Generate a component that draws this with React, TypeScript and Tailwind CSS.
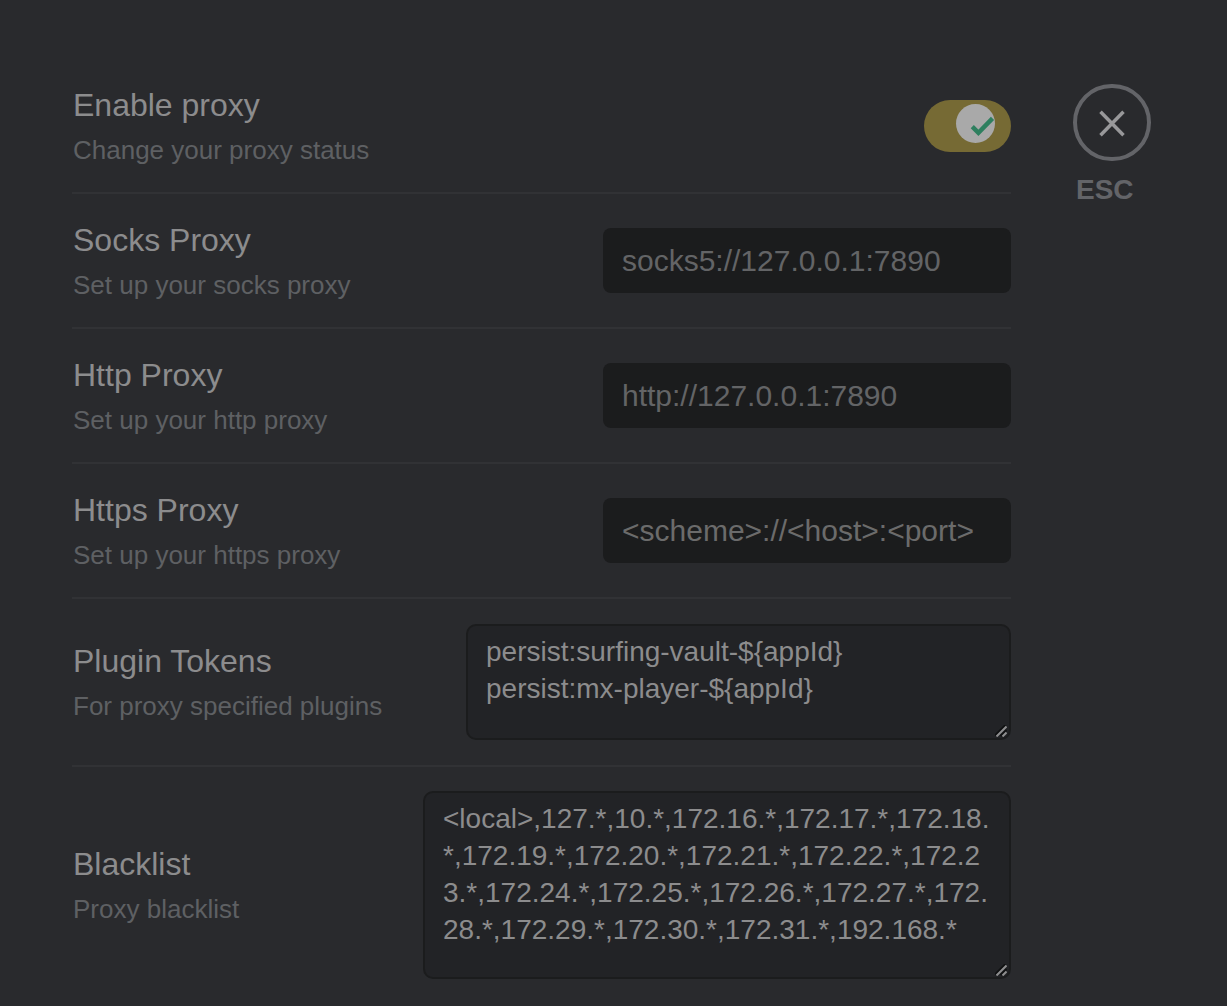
import { ReactNode } from "react";

type RowProps = {
  id: string;
  title: string;
  hint: string;
  last?: boolean;
  children: ReactNode;
};

function Row({ id, title, hint, last = false, children }: RowProps) {
  return (
    <div
      className={
        last
          ? "flex min-h-[135px] items-center justify-between gap-6 py-6"
          : "flex min-h-[135px] items-center justify-between gap-6 border-b-2 border-[#313235] py-[25px]"
      }
    >
      <div className="-my-2 min-w-0 pl-px">
        <label htmlFor={id} className="block text-[32px] leading-[48px] text-[#8c8c8d]">
          {title}
        </label>
        <p id={`${id}-hint`} className="text-[26px] leading-[42px] text-[#5e6063]">
          {hint}
        </p>
      </div>
      {children}
    </div>
  );
}

type FieldProps = { id: string; title: string; hint: string; value?: string; placeholder?: string };

function ProxyField({ id, title, hint, value, placeholder }: FieldProps) {
  return (
    <Row id={id} title={title} hint={hint}>
      <input
        id={id}
        type="text"
        aria-describedby={`${id}-hint`}
        defaultValue={value}
        placeholder={placeholder}
        className="h-[65px] w-[408px] min-w-0 rounded-lg bg-[#1b1c1d] px-[19px] text-[30px] text-[#636466] outline-none placeholder:text-[#6b6b6b] placeholder:opacity-100"
      />
    </Row>
  );
}

type AreaProps = {
  id: string;
  title: string;
  hint: string;
  value: string;
  size: string;
  last?: boolean;
};

function AreaField({ id, title, hint, value, size, last }: AreaProps) {
  return (
    <Row id={id} title={title} hint={hint} last={last}>
      <div className="relative flex">
        <textarea
          id={id}
          aria-describedby={`${id}-hint`}
          defaultValue={value}
          spellCheck={false}
          className={`${size} resize-none overflow-hidden rounded-[10px] border-2 border-[#1b1c1d] bg-[#222326] px-[18px] py-[7px] text-[28px] leading-[37px] break-all text-[#8c8c8d] outline-none`}
        />
        <svg
          aria-hidden="true"
          className="pointer-events-none absolute right-1 bottom-[3px]"
          width="12"
          height="12"
          viewBox="0 0 12 12"
          fill="none"
        >
          <path d="M0 10.5 10.5 0M5.5 11 11.5 5" stroke="#0f1011" strokeWidth="2" />
          <path d="M1.5 11.5 11.5 1.5M7.5 11.5l4-4" stroke="#8e8e8f" strokeWidth="2" />
        </svg>
      </div>
    </Row>
  );
}

export default function App() {
  return (
    <main className="flex min-h-screen items-start gap-[62px] bg-[#292a2d] pt-[59px] pr-[76px] pl-[72px] font-['Liberation_Sans',Arial,sans-serif]">
      <form className="min-w-0 flex-1">
        <Row id="enable" title="Enable proxy" hint="Change your proxy status">
          <div className="relative h-[52px] w-[87px]">
            <input
              id="enable"
              type="checkbox"
              role="switch"
              defaultChecked
              aria-describedby="enable-hint"
              className="peer block h-full w-full cursor-pointer appearance-none rounded-full bg-[#4a4b4e] checked:bg-[#766a34]"
            />
            <span className="pointer-events-none absolute top-1 left-1 size-[39px] rounded-full bg-[#a9a9a9] peer-checked:left-8">
              <svg aria-hidden="true" width="39" height="39" viewBox="0 0 39 39" fill="none">
                <path d="M16.3 22.6 22.4 28.8 36.5 14.4" stroke="#2e7f5f" strokeWidth="4.4" />
              </svg>
            </span>
          </div>
        </Row>
        <ProxyField
          id="socks"
          title="Socks Proxy"
          hint="Set up your socks proxy"
          value="socks5://127.0.0.1:7890"
        />
        <ProxyField
          id="http"
          title="Http Proxy"
          hint="Set up your http proxy"
          value="http://127.0.0.1:7890"
        />
        <ProxyField
          id="https"
          title="Https Proxy"
          hint="Set up your https proxy"
          placeholder="<scheme>://<host>:<port>"
        />
        <AreaField
          id="tokens"
          title="Plugin Tokens"
          hint="For proxy specified plugins"
          value={"persist:surfing-vault-${appId}\npersist:mx-player-${appId}"}
          size="h-[116px] w-[545px]"
        />
        <AreaField
          id="blacklist"
          title="Blacklist"
          hint="Proxy blacklist"
          value="<local>,127.*,10.*,172.16.*,172.17.*,172.18.*,172.19.*,172.20.*,172.21.*,172.22.*,172.23.*,172.24.*,172.25.*,172.26.*,172.27.*,172.28.*,172.29.*,172.30.*,172.31.*,192.168.*"
          size="h-[188px] w-[588px]"
          last
        />
      </form>
      <button
        type="button"
        aria-label="Close (ESC)"
        className="mt-[25px] flex w-[78px] cursor-pointer flex-col items-start"
      >
        <span className="flex h-[77px] w-[78px] items-center justify-center rounded-full border-4 border-[#636468]">
          <svg aria-hidden="true" width="28" height="28" viewBox="0 0 28 28" fill="none">
            <path d="M2.5 2.7 25.5 26.3M25.5 2.7 2.5 26.3" stroke="#98989a" strokeWidth="3.5" />
          </svg>
        </span>
        <span className="mt-[13px] pl-[3px] text-[28px] leading-8 font-bold text-[#636468]">ESC</span>
      </button>
    </main>
  );
}
